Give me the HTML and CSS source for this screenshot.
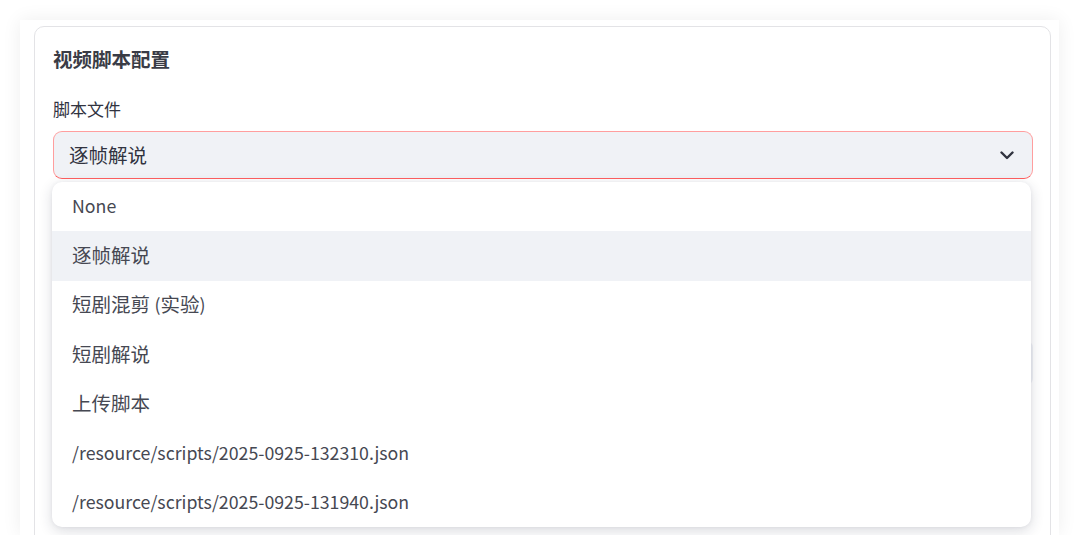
FILE: index.html
```html
<!DOCTYPE html>
<html lang="zh">
<head>
<meta charset="utf-8">
<link rel="stylesheet" href="styles.css">
</head>
<body>
<div class="frame">
  <div class="card">
    <h2 class="title">视频脚本配置</h2>
    <div class="label">脚本文件</div>
    <div class="select-wrap">
      <div class="select">
        <span class="value">逐帧解说</span>
        <svg class="chevron" width="14" height="9" viewBox="0 0 14 9"><path d="M1.5 1.5 L7 7 L12.5 1.5" fill="none" stroke="#31333f" stroke-width="2.4" stroke-linecap="round" stroke-linejoin="round"/></svg>
      </div>
      <ul class="menu">
        <li class="item"><span class="lat">None</span></li>
        <li class="item active">逐帧解说</li>
        <li class="item">短剧混剪 <span class="lat">(</span>实验<span class="lat">)</span></li>
        <li class="item">短剧解说</li>
        <li class="item">上传脚本</li>
        <li class="item"><span class="lat">/resource/scripts/2025-0925-132310.json</span></li>
        <li class="item"><span class="lat">/resource/scripts/2025-0925-131940.json</span></li>
      </ul>
    </div>
    <div class="field-below"></div>
  </div>
</div>
</body>
</html>
```

FILE: styles.css
```css
* { box-sizing: border-box; }
html, body { margin: 0; padding: 0; background: #ffffff; }
body {
  padding: 20px 21px 0 20px;
  font-family: "Noto Sans CJK SC", "Noto Sans", sans-serif;
  color: #31333f;
}
.frame {
  width: 1039px;
  height: 515px;
  overflow: hidden;
  background: #ffffff;
  box-shadow: 0 0 18px rgba(0, 0, 0, 0.07);
  padding: 6px 8px 0 14px;
}
.card {
  border: 1px solid #e3e3e6;
  border-radius: 10px;
  padding: 17px 17px 0 18px;
  height: 600px;
}
.title {
  margin: 0;
  font-size: 19.5px;
  font-weight: 700;
  line-height: 30px;
  color: #3a3c46;
}
.label {
  margin-top: 23px;
  font-size: 17px;
  line-height: 24px;
  color: #31333f;
}
.select-wrap {
  position: relative;
  margin-top: 10px;
}
.select {
  height: 48px;
  background: #f0f2f6;
  border: 1px solid #ff9e9e;
  border-bottom-color: #ff5f5f;
  border-radius: 9px;
  display: flex;
  align-items: center;
  justify-content: space-between;
  padding: 0 18px 0 15px;
}
.value {
  font-size: 19.5px;
  line-height: 24px;
}
.chevron { display: block; }
.field-below {
  margin-top: 160px;
  height: 48px;
  background: #f0f2f6;
  border-radius: 9px;
}
.menu {
  position: absolute;
  top: 51px;
  left: -1px;
  width: 979px;
  margin: 0;
  padding: 0;
  list-style: none;
  background: #ffffff;
  border-radius: 10px;
  overflow: hidden;
  box-shadow: 0 4px 14px rgba(30, 35, 60, 0.16), 0 0 4px rgba(30, 35, 60, 0.06);
  z-index: 2;
}
.item {
  height: 49.3px;
  display: flex;
  align-items: center;
  padding: 0 0 3px 20px;
  font-size: 19.5px;
  color: #464852;
  white-space: pre;
}
.lat { font-size: 0.91em; }
.item.active { background: #f0f2f6; }
```
